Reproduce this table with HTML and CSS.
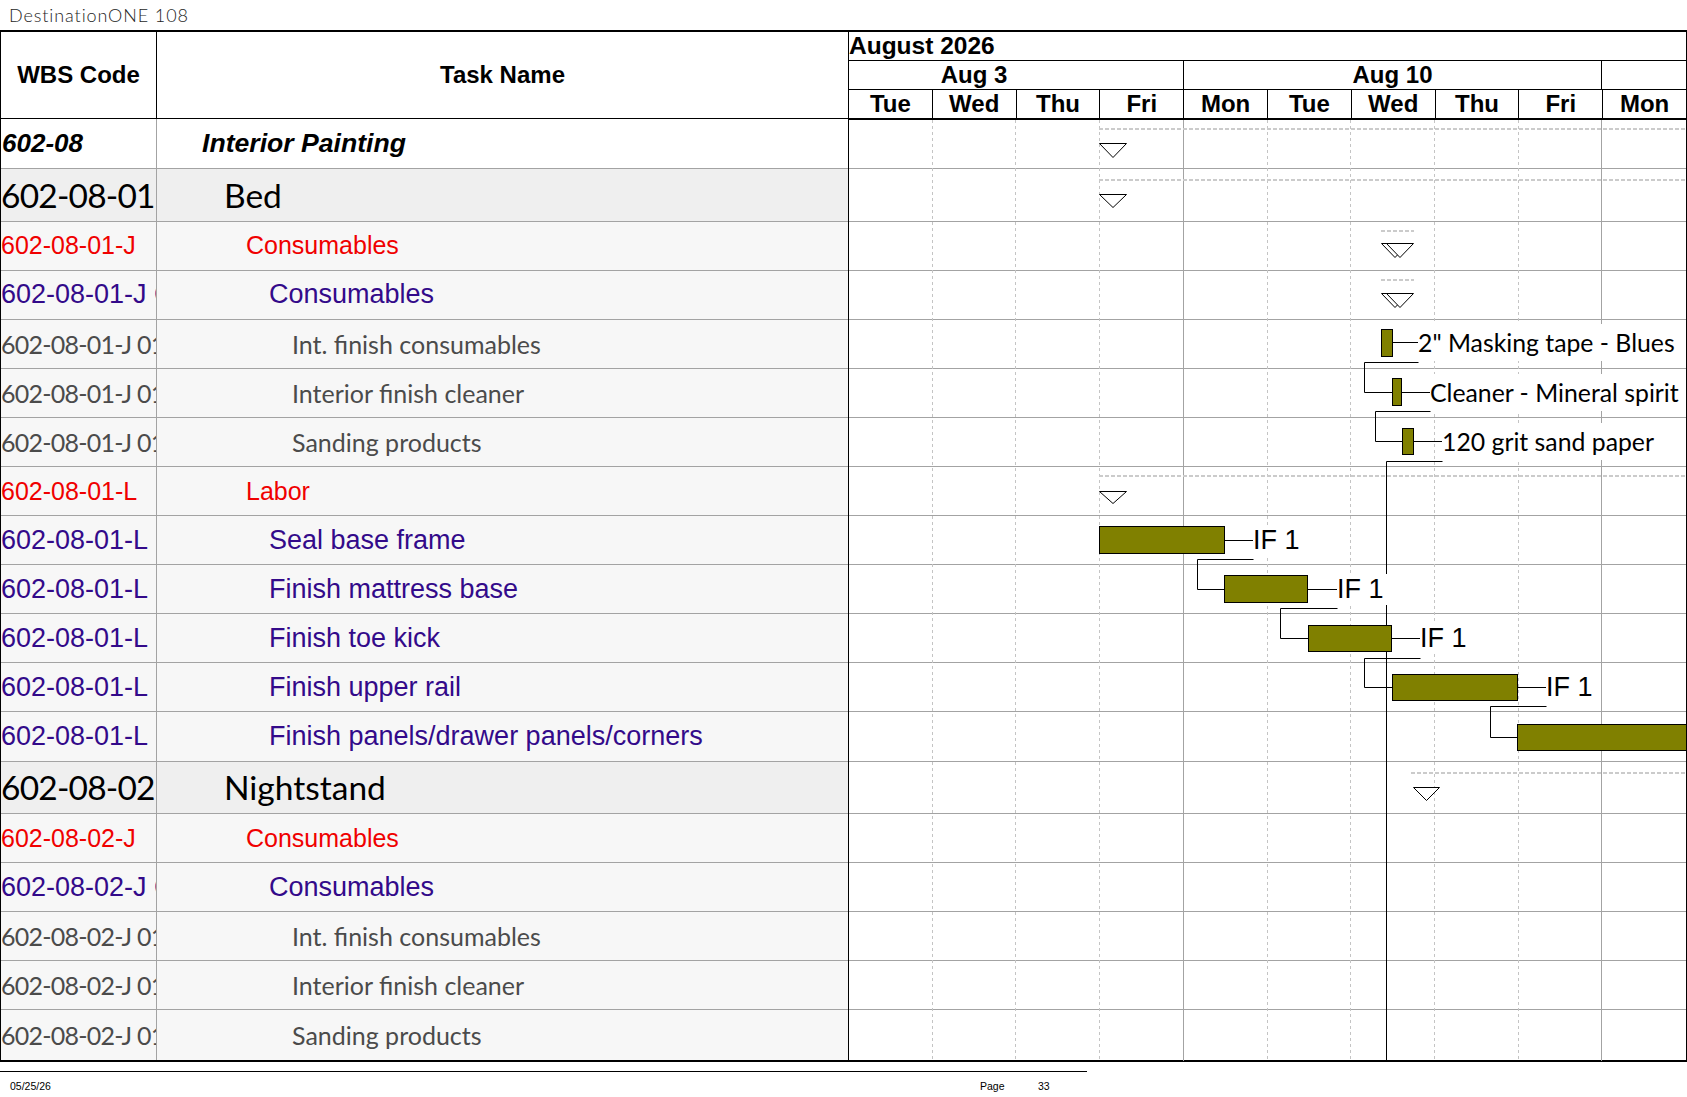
FILE: index.html
```html
<!DOCTYPE html>
<html lang="en">
<head>
<meta charset="utf-8">
<title>DestinationONE 108</title>
<link rel="stylesheet" href="styles.css">
</head>
<body>
<div class="title">DestinationONE 108</div>
<div class="sheet">
  <div class="grid-side">
    <div class="thead">
      <div class="wbs">WBS Code</div>
      <div class="task">Task Name</div>
    </div>
    <div class="row l1"><div class="wbs">602-08</div><div class="task">Interior Painting</div></div>
    <div class="row l2"><div class="wbs">602-08-01</div><div class="task">Bed</div></div>
    <div class="row l3"><div class="wbs">602-08-01-J</div><div class="task">Consumables</div></div>
    <div class="row l4"><div class="wbs">602-08-01-J Consumables</div><div class="task">Consumables</div></div>
    <div class="row l5"><div class="wbs">602-08-01-J 01.01</div><div class="task">Int. finish consumables</div></div>
    <div class="row l5"><div class="wbs">602-08-01-J 01.02</div><div class="task">Interior finish cleaner</div></div>
    <div class="row l5"><div class="wbs">602-08-01-J 01.03</div><div class="task">Sanding products</div></div>
    <div class="row l3"><div class="wbs">602-08-01-L</div><div class="task">Labor</div></div>
    <div class="row l4"><div class="wbs">602-08-01-L</div><div class="task">Seal base frame</div></div>
    <div class="row l4"><div class="wbs">602-08-01-L</div><div class="task">Finish mattress base</div></div>
    <div class="row l4"><div class="wbs">602-08-01-L</div><div class="task">Finish toe kick</div></div>
    <div class="row l4"><div class="wbs">602-08-01-L</div><div class="task">Finish upper rail</div></div>
    <div class="row l4"><div class="wbs">602-08-01-L</div><div class="task">Finish panels/drawer panels/corners</div></div>
    <div class="row l2"><div class="wbs">602-08-02</div><div class="task">Nightstand</div></div>
    <div class="row l3"><div class="wbs">602-08-02-J</div><div class="task">Consumables</div></div>
    <div class="row l4"><div class="wbs">602-08-02-J Consumables</div><div class="task">Consumables</div></div>
    <div class="row l5"><div class="wbs">602-08-02-J 01.01</div><div class="task">Int. finish consumables</div></div>
    <div class="row l5"><div class="wbs">602-08-02-J 01.02</div><div class="task">Interior finish cleaner</div></div>
    <div class="row l5 last"><div class="wbs">602-08-02-J 01.03</div><div class="task">Sanding products</div></div>
  </div>

  <div class="chart">
    <div class="chart-head">
      <div class="month">August 2026</div>
      <div class="weeks">
        <div class="week w4">Aug 3</div>
        <div class="week w5">Aug 10</div>
        <div class="week w1"></div>
      </div>
      <div class="days">
        <div class="day">Tue</div><div class="day">Wed</div><div class="day">Thu</div><div class="day">Fri</div>
        <div class="day">Mon</div><div class="day">Tue</div><div class="day">Wed</div><div class="day">Thu</div>
        <div class="day">Fri</div><div class="day">Mon</div>
      </div>
    </div>
    <div class="chart-body">
      <div class="crow first"></div>
      <div class="crow big"></div>
      <div class="crow"></div>
      <div class="crow"></div>
      <div class="crow"></div>
      <div class="crow"></div>
      <div class="crow"></div>
      <div class="crow"></div>
      <div class="crow"></div>
      <div class="crow"></div>
      <div class="crow"></div>
      <div class="crow"></div>
      <div class="crow"></div>
      <div class="crow big"></div>
      <div class="crow"></div>
      <div class="crow"></div>
      <div class="crow"></div>
      <div class="crow"></div>
      <div class="crow last"></div>

      <svg class="gantt" width="837" height="941" viewBox="0 0 837 941" xmlns="http://www.w3.org/2000/svg">
        <g class="vgrid-day">
          <line x1="83.5" y1="0" x2="83.5" y2="941"/>
          <line x1="166.5" y1="0" x2="166.5" y2="941"/>
          <line x1="250.5" y1="0" x2="250.5" y2="941"/>
          <line x1="418.5" y1="0" x2="418.5" y2="941"/>
          <line x1="501.5" y1="0" x2="501.5" y2="941"/>
          <line x1="585.5" y1="0" x2="585.5" y2="941"/>
          <line x1="669.5" y1="0" x2="669.5" y2="941"/>
        </g>
        <g class="vgrid-week">
          <line x1="334.5" y1="0" x2="334.5" y2="941"/>
          <line x1="752.5" y1="0" x2="752.5" y2="941"/>
        </g>

        <g class="summary-line">
          <line x1="250" y1="9" x2="837" y2="9"/>
          <line x1="250" y1="60" x2="837" y2="60"/>
          <line x1="532" y1="111" x2="565" y2="111"/>
          <line x1="532" y1="160" x2="565" y2="160"/>
          <line x1="250" y1="356" x2="837" y2="356"/>
          <line x1="562" y1="653" x2="837" y2="653"/>
        </g>

        <g class="links">
          <path d="M543,222.5 H569.5"/>
          <path d="M569.5,242.5 H515.5 V272.5 H543.5"/>
          <path d="M552,272.5 H581.5"/>
          <path d="M581.5,291.5 H526.5 V321.5 H553.5"/>
          <path d="M564,321.5 H593.5"/>
          <path d="M593.5,341.5 H537.5 V941"/>
          <path d="M375,420.5 H404.5"/>
          <path d="M404.5,439.5 H348.5 V469.5 H375.5"/>
          <path d="M458,469.5 H488.5"/>
          <path d="M488.5,488.5 H431.5 V518.5 H459.5"/>
          <path d="M542,518.5 H571.5"/>
          <path d="M571.5,538.5 H515.5 V567.5 H543.5"/>
          <path d="M668,567.5 H697.5"/>
          <path d="M697.5,586.5 H641.5 V617.5 H668.5"/>
        </g>

        <g class="bars">
          <rect x="532.5" y="209.5" width="11" height="27"/>
          <rect x="543.5" y="258.5" width="9" height="27"/>
          <rect x="553.5" y="308.5" width="11" height="26"/>
          <rect x="250.5" y="406.5" width="125" height="27"/>
          <rect x="375.5" y="455.5" width="83" height="27"/>
          <rect x="459.5" y="505.5" width="83" height="26"/>
          <rect x="543.5" y="554.5" width="125" height="26"/>
          <rect x="668.5" y="604.5" width="175" height="26"/>
        </g>

        <g class="markers">
          <polygon points="250.5,23.5 277.5,23.5 264,37.5"/>
          <polygon points="250.5,74.5 277.5,74.5 264,87.5"/>
          <polygon points="532.5,123.5 559.5,123.5 546,137.5"/>
          <polygon points="537.5,123.5 564.5,123.5 551,137.5"/>
          <polygon points="532.5,173.5 559.5,173.5 546,187.5"/>
          <polygon points="537.5,173.5 564.5,173.5 551,187.5"/>
          <polygon points="250.5,371.5 277.5,371.5 264,383.5"/>
          <polygon points="564.5,667.5 590.5,667.5 577.5,680.5"/>
        </g>
      </svg>

      <span class="blabel cal" style="left:569px;top:203.5px">2" Masking tape - Blues</span>
      <span class="blabel cal" style="left:581px;top:253.5px">Cleaner - Mineral spirit</span>
      <span class="blabel cal" style="left:593px;top:302.5px">120 grit sand paper</span>
      <span class="blabel lag" style="left:404px;top:404.5px">IF 1</span>
      <span class="blabel lag" style="left:488px;top:453.5px">IF 1</span>
      <span class="blabel lag" style="left:571px;top:502.5px">IF 1</span>
      <span class="blabel lag" style="left:697px;top:551.5px">IF 1</span>
    </div>
  </div>
</div>
<div class="footer">
  <div class="f-date">05/25/26</div>
  <div class="f-page">Page</div>
  <div class="f-num">33</div>
</div>
</body>
</html>
```

FILE: styles.css
```css
html, body {
  margin: 0;
  padding: 0;
  background: #ffffff;
  overflow: hidden;
}

body {
  width: 1687px;
  height: 1097px;
  font-family: "Liberation Sans", Arial, sans-serif;
  color: #000;
}

.title {
  height: 30px;
  line-height: 30px;
  padding-left: 9px;
  font-family: Lato, "Open Sans", sans-serif;
  font-weight: 300;
  font-size: 18px;
  color: #1e1e1e;
  letter-spacing: 0.9px;
}

/* ---------- sheet ---------- */
.sheet {
  display: flex;
  width: 1687px;
  box-sizing: border-box;
  border-top: 2px solid #000;
  border-bottom: 2px solid #000;
  border-left: 1px solid #000;
}

.grid-side {
  width: 847px;
  display: flex;
  flex-direction: column;
}

.thead {
  display: flex;
  height: 87px;
  box-sizing: border-box;
  border-bottom: 1px solid #000;
  font-weight: bold;
  font-size: 24px;
}

.thead .wbs {
  width: 156px;
  box-sizing: border-box;
  border-right: 1px solid #000;
  display: flex;
  align-items: center;
  justify-content: center;
}

.thead .task {
  flex: 1;
  display: flex;
  align-items: center;
  justify-content: center;
}

.row {
  display: flex;
  height: 49.1px;
  box-sizing: border-box;
  border-bottom: 1px solid #a3a3a3;
  background: #f7f7f7;
  white-space: nowrap;
}

.row.last {
  border-bottom: none;
}

.row .wbs {
  width: 156px;
  box-sizing: border-box;
  border-right: 1px solid #a3a3a3;
  overflow: hidden;
  display: flex;
  align-items: center;
}

.row .task {
  flex: 1;
  overflow: hidden;
  display: flex;
  align-items: center;
}

/* level 1: summary */
.row.l1 {
  height: 50px;
  background: #ffffff;
  font-weight: bold;
  font-style: italic;
  font-size: 26px;
}
.row.l1 .wbs { padding-left: 1px; }
.row.l1 .task {
  padding-left: 45px;
  font-size: 26.6px;
}

/* level 2: furniture item */
.row.l2 {
  height: 52.5px;
  background: #efefef;
  font-family: Lato, "Open Sans", sans-serif;
  font-size: 33.5px;
  color: #000;
}
.row.l2 .wbs { letter-spacing: -0.8px; }
.row.l2 .task { padding-left: 67px; }

/* level 3: category */
.row.l3 {
  color: #f00000;
  font-size: 25px;
}
.row.l3 .task { padding-left: 89px; }

/* level 4: task */
.row.l4 {
  color: #330a8a;
  font-size: 27px;
}
.row.l4 .task { padding-left: 112px; }

/* level 5: materials */
.row.l5 {
  color: #4b4b4b;
  font-family: Lato, "Open Sans", sans-serif;
  font-size: 25px;
}
.row.l5 .wbs { letter-spacing: -0.75px; }
.row.l5 .task { padding-left: 135px; }

/* ---------- chart ---------- */
.chart {
  width: 839px;
  box-sizing: border-box;
  border-left: 1px solid #000;
  border-right: 1px solid #000;
  display: flex;
  flex-direction: column;
}

.chart-head {
  font-weight: bold;
  font-size: 24px;
  white-space: nowrap;
}

.month {
  height: 29px;
  box-sizing: border-box;
  border-bottom: 1px solid #000;
  line-height: 28px;
  font-size: 24.5px;
}

.weeks {
  display: flex;
  height: 29px;
  box-sizing: border-box;
  border-bottom: 1px solid #000;
}

.week {
  box-sizing: border-box;
  text-align: center;
  line-height: 28px;
}

.week.w4 {
  width: 334.8px;
  border-right: 1px solid #000;
  padding-right: 83.7px;
}

.week.w5 {
  width: 418.5px;
  border-right: 1px solid #000;
}

.week.w1 {
  flex: 1;
}

.days {
  display: flex;
  height: 30px;
  box-sizing: border-box;
  border-bottom: 2px solid #000;
}

.day {
  flex: 1;
  box-sizing: border-box;
  border-right: 1px solid #000;
  text-align: center;
  line-height: 28px;
}

.day:last-child {
  border-right: none;
}

.chart-body {
  position: relative;
  display: flex;
  flex-direction: column;
}

.crow {
  height: 49.1px;
  box-sizing: border-box;
  border-bottom: 1px solid #a3a3a3;
}

.crow.first { height: 49px; }
.crow.big { height: 52.5px; }
.crow.last { border-bottom: none; }

.gantt {
  position: absolute;
  left: 0;
  top: 0;
  pointer-events: none;
}

.vgrid-day line {
  stroke: #c4c4c4;
  stroke-width: 1;
  stroke-dasharray: 3 3;
}

.vgrid-week line {
  stroke: #a3a3a3;
  stroke-width: 1;
}

.summary-line line {
  stroke: #cbcbcb;
  stroke-width: 2;
  stroke-dasharray: 4 2;
}

.links path {
  fill: none;
  stroke: #000;
  stroke-width: 1;
}

.bars rect {
  fill: #808000;
  stroke: #000;
  stroke-width: 1;
}

.markers polygon {
  fill: #ffffff;
  stroke: #000;
  stroke-width: 1;
}

.blabel {
  position: absolute;
  background: #ffffff;
  white-space: nowrap;
  padding-right: 4px;
  color: #000;
}

.blabel.cal {
  font-family: Lato, "Open Sans", sans-serif;
  font-size: 24.8px;
  height: 37px;
  line-height: 37px;
}

.blabel.lag {
  font-family: "Liberation Sans", Arial, sans-serif;
  font-size: 27px;
  height: 31px;
  line-height: 31px;
}

/* ---------- footer ---------- */
.footer {
  width: 1087px;
  margin-top: 9px;
  border-top: 1px solid #000;
  display: flex;
  padding-top: 8px;
  font-size: 10.5px;
  line-height: 12px;
  color: #000;
}

.f-date {
  width: 980px;
  box-sizing: border-box;
  padding-left: 10px;
}

.f-page {
  width: 58px;
}
```
